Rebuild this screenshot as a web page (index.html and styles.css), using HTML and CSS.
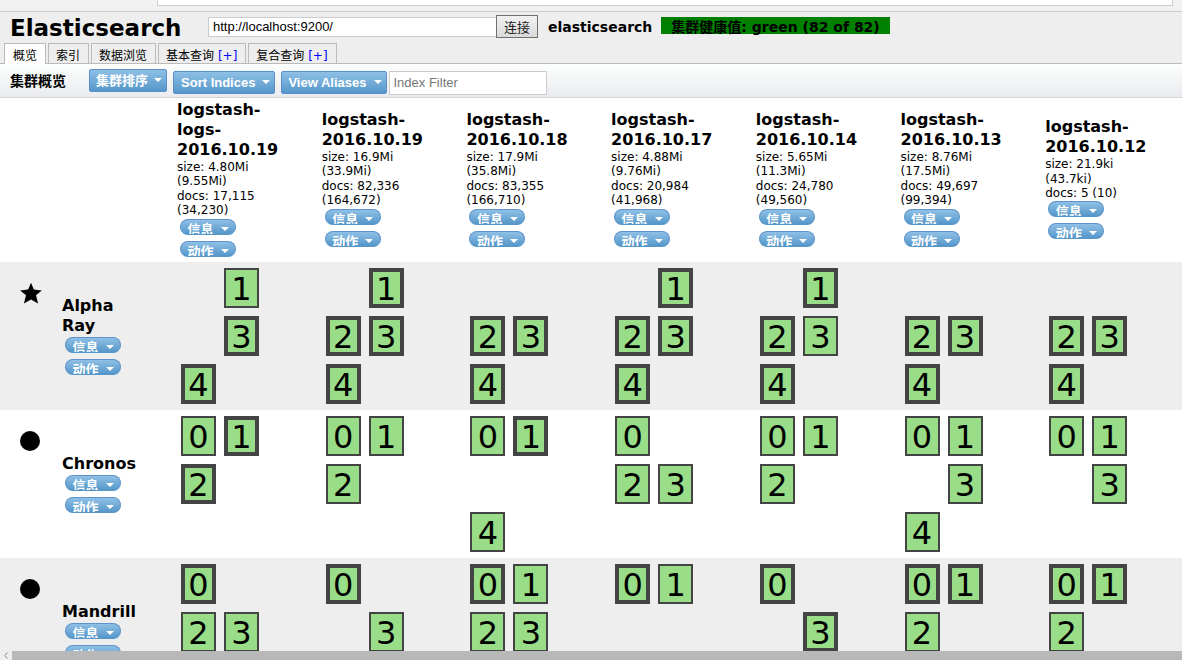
FILE: index.html
```html
<!DOCTYPE html>
<html lang="zh-CN">
<head>
<meta charset="utf-8">
<title>elasticsearch-head</title>
<link rel="stylesheet" href="styles.css">
</head>
<body>
<div class="chrome"><div class="address"></div></div>
<header class="header">
  <div class="connect">
    <h1 class="brand">Elasticsearch</h1>
    <form class="uri-form">
      <input class="uri" type="text" aria-label="URI" value="http://localhost:9200/">
      <button class="connect-button" type="button">连接</button>
    </form>
    <span class="cluster-name">elasticsearch</span>
    <span class="health">集群健康值: green (82 of 82)</span>
  </div>
  <nav class="tabs">
    <div class="tab active"><a href="#overview">概览</a></div>
    <div class="tab"><a href="#indices">索引</a></div>
    <div class="tab"><a href="#browser">数据浏览</a></div>
    <div class="tab"><a href="#basic">基本查询</a> <a class="add" href="#basic-new">[+]</a></div>
    <div class="tab"><a href="#compound">复合查询</a> <a class="add" href="#compound-new">[+]</a></div>
  </nav>
</header>
<div class="toolbar">
  <h2 class="toolbar-title">集群概览</h2>
  <button class="menu sort-cluster" type="button">集群排序<i class="caret"></i></button>
  <button class="menu" type="button">Sort Indices<i class="caret"></i></button>
  <button class="menu" type="button">View Aliases<i class="caret"></i></button>
  <input class="filter" type="text" aria-label="Index Filter" placeholder="Index Filter">
</div>
<main class="viewport">
<table class="cluster">
  <colgroup><col class="col-icon"><col class="col-name"><col span="7"></colgroup>
  <thead>
    <tr>
      <td></td><td></td>
      <th><h3>logstash-logs-2016.10.19</h3><p>size: 4.80Mi (9.55Mi)</p><p>docs: 17,115 (34,230)</p><div class="actions"><button class="pill" type="button">信息<i class="caret"></i></button><button class="pill" type="button">动作<i class="caret"></i></button></div></th>
      <th><h3>logstash-2016.10.19</h3><p>size: 16.9Mi (33.9Mi)</p><p>docs: 82,336 (164,672)</p><div class="actions"><button class="pill" type="button">信息<i class="caret"></i></button><button class="pill" type="button">动作<i class="caret"></i></button></div></th>
      <th><h3>logstash-2016.10.18</h3><p>size: 17.9Mi (35.8Mi)</p><p>docs: 83,355 (166,710)</p><div class="actions"><button class="pill" type="button">信息<i class="caret"></i></button><button class="pill" type="button">动作<i class="caret"></i></button></div></th>
      <th><h3>logstash-2016.10.17</h3><p>size: 4.88Mi (9.76Mi)</p><p>docs: 20,984 (41,968)</p><div class="actions"><button class="pill" type="button">信息<i class="caret"></i></button><button class="pill" type="button">动作<i class="caret"></i></button></div></th>
      <th><h3>logstash-2016.10.14</h3><p>size: 5.65Mi (11.3Mi)</p><p>docs: 24,780 (49,560)</p><div class="actions"><button class="pill" type="button">信息<i class="caret"></i></button><button class="pill" type="button">动作<i class="caret"></i></button></div></th>
      <th><h3>logstash-2016.10.13</h3><p>size: 8.76Mi (17.5Mi)</p><p>docs: 49,697 (99,394)</p><div class="actions"><button class="pill" type="button">信息<i class="caret"></i></button><button class="pill" type="button">动作<i class="caret"></i></button></div></th>
      <th><h3>logstash-2016.10.12</h3><p>size: 21.9ki (43.7ki)</p><p>docs: 5 (10)</p><div class="actions"><button class="pill" type="button">信息<i class="caret"></i></button><button class="pill" type="button">动作<i class="caret"></i></button></div></th>
    </tr>
  </thead>
  <tbody>
    <tr>
      <td class="icon"><svg width="22" height="22" viewBox="0 0 22 22"><path d="M11 .8 13.9 7.4 21.8 8.4 16 13.3 18.1 21.4 11 17.4 3.9 21.4 6 13.3.2 8.4 8.1 7.4Z"/></svg></td>
      <th class="name" scope="row"><h3>Alpha Ray</h3><div class="actions"><button class="pill" type="button">信息<i class="caret"></i></button><button class="pill" type="button">动作<i class="caret"></i></button></div></th>
      <td><div class="shards"><b class="s1">1</b><b class="s3 primary">3</b><b class="s4 primary">4</b></div></td>
      <td><div class="shards"><b class="s1 primary">1</b><b class="s2 primary">2</b><b class="s3 primary">3</b><b class="s4 primary">4</b></div></td>
      <td><div class="shards"><b class="s2 primary">2</b><b class="s3 primary">3</b><b class="s4 primary">4</b></div></td>
      <td><div class="shards"><b class="s1 primary">1</b><b class="s2 primary">2</b><b class="s3 primary">3</b><b class="s4 primary">4</b></div></td>
      <td><div class="shards"><b class="s1 primary">1</b><b class="s2 primary">2</b><b class="s3">3</b><b class="s4 primary">4</b></div></td>
      <td><div class="shards"><b class="s2 primary">2</b><b class="s3 primary">3</b><b class="s4 primary">4</b></div></td>
      <td><div class="shards"><b class="s2 primary">2</b><b class="s3 primary">3</b><b class="s4 primary">4</b></div></td>
    </tr>
    <tr>
      <td class="icon"><svg width="22" height="22" viewBox="0 0 22 22"><circle cx="10" cy="11" r="10"/></svg></td>
      <th class="name" scope="row"><h3>Chronos</h3><div class="actions"><button class="pill" type="button">信息<i class="caret"></i></button><button class="pill" type="button">动作<i class="caret"></i></button></div></th>
      <td><div class="shards"><b class="s0">0</b><b class="s1 primary">1</b><b class="s2 primary">2</b></div></td>
      <td><div class="shards"><b class="s0">0</b><b class="s1">1</b><b class="s2">2</b></div></td>
      <td><div class="shards"><b class="s0">0</b><b class="s1 primary">1</b><b class="s4">4</b></div></td>
      <td><div class="shards"><b class="s0">0</b><b class="s2">2</b><b class="s3">3</b></div></td>
      <td><div class="shards"><b class="s0">0</b><b class="s1">1</b><b class="s2">2</b></div></td>
      <td><div class="shards"><b class="s0">0</b><b class="s1">1</b><b class="s3">3</b><b class="s4">4</b></div></td>
      <td><div class="shards"><b class="s0">0</b><b class="s1">1</b><b class="s3">3</b></div></td>
    </tr>
    <tr>
      <td class="icon"><svg width="22" height="22" viewBox="0 0 22 22"><circle cx="10" cy="11" r="10"/></svg></td>
      <th class="name" scope="row"><h3>Mandrill</h3><div class="actions"><button class="pill" type="button">信息<i class="caret"></i></button><button class="pill" type="button">动作<i class="caret"></i></button></div></th>
      <td><div class="shards"><b class="s0 primary">0</b><b class="s2">2</b><b class="s3">3</b></div></td>
      <td><div class="shards"><b class="s0 primary">0</b><b class="s3">3</b></div></td>
      <td><div class="shards"><b class="s0 primary">0</b><b class="s1">1</b><b class="s2">2</b><b class="s3">3</b></div></td>
      <td><div class="shards"><b class="s0 primary">0</b><b class="s1">1</b></div></td>
      <td><div class="shards"><b class="s0 primary">0</b><b class="s3 primary">3</b></div></td>
      <td><div class="shards"><b class="s0 primary">0</b><b class="s1 primary">1</b><b class="s2">2</b></div></td>
      <td><div class="shards"><b class="s0 primary">0</b><b class="s1 primary">1</b><b class="s2">2</b></div></td>
    </tr>
  </tbody>
</table>
</main>
<div class="scrollbar">
  <div class="scroll-left"><svg width="4" height="7" viewBox="0 0 4 7"><path d="M3.5.5.7 3.5l2.8 3" fill="none" stroke="#888"/></svg></div>
  <div class="scroll-thumb"></div>
</div>
</body>
</html>
```

FILE: styles.css
```css
* { box-sizing: border-box; }

body {
  display: flex;
  flex-direction: column;
  height: 100vh;
  margin: 0;
  overflow: hidden;
  background: #fff;
  color: #000;
  font: 12px/1.2 "DejaVu Sans", "Noto Sans CJK SC", sans-serif;
}

h1, h2, h3, p { margin: 0; }
a { color: inherit; text-decoration: none; }

/* Browser chrome above the page */
.chrome {
  flex: none;
  height: 12px;
  padding: 0 9px 0 157px;
  background: #f2f2f2;
  border-bottom: 1px solid #ccc;
}
.address {
  height: 6px;
  background: #fff;
  border: 1px solid #ccc;
  border-top: 0;
}

/* Header */
.header {
  flex: none;
  background: #eee;
  border-bottom: 1px solid #bbb;
}
.connect {
  display: flex;
  align-items: flex-start;
  height: 31px;
  padding: 3px 10px 0;
}
.brand {
  width: 198px;
  font-size: 23px;
  line-height: 26px;
}
.uri-form { display: flex; align-items: center; }
.uri {
  width: 288px;
  height: 20px;
  padding: 0 4px;
  border: 1px solid #ccc;
  border-right: 0;
  background: #fff;
  font: 13px "Liberation Sans", sans-serif;
}
.connect-button {
  width: 42px;
  height: 23px;
  padding: 0;
  border: 1px solid #707070;
  background: linear-gradient(#f1f1f1, #dadada);
  color: #222;
  font: 13px "Noto Sans CJK SC", sans-serif;
  line-height: 20px;
}
.cluster-name, .health {
  margin: 2px 0 0 10px;
  font-size: 14px;
  font-weight: bold;
  line-height: 17px;
  height: 17px;
  padding-top: 2px;
}
.cluster-name { margin-right: -1px; }
.health { padding: 2px 10px 0; background: green; }

.tabs {
  display: flex;
  gap: 2px;
  padding-left: 4px;
}
.tab {
  height: 20px;
  padding: 3px 8px 0 7px;
  border: 1px solid #bbb;
  border-bottom: 0;
  line-height: 18px;
  white-space: nowrap;
}
.tab.active {
  margin-bottom: -1px;
  height: 21px;
  padding-left: 8px;
  background: #fff;
}
.add { color: blue; }

/* Toolbar */
.toolbar {
  flex: none;
  display: flex;
  align-items: flex-start;
  height: 34px;
  padding: 5px 10px 0;
  background: linear-gradient(#fdfefe, #e9ebee);
  border-bottom: 1px solid #d2d5d8;
}
.toolbar-title {
  width: 79px;
  font-size: 14px;
  line-height: 24px;
}
.menu {
  height: 23px;
  margin: 2px 6px 0 0;
  padding: 0 1px 0 7px;
  border: 1px solid #5b8fcb;
  border-radius: 2px;
  background: linear-gradient(#8fc0e6, #5597c9);
  color: #fff;
  font: bold 13px "Liberation Sans", "Noto Sans CJK SC", sans-serif;
  line-height: 19px;
  white-space: nowrap;
}
.sort-cluster { margin-top: 0; padding-left: 6px; }
.caret {
  display: inline-block;
  margin: 0 3px 0 7px;
  border: 4px solid transparent;
  border-top-color: #fff;
  border-bottom: 0;
  vertical-align: 3px;
}
.sort-cluster .caret { margin-left: 6px; }
.menu:nth-of-type(3) { margin-right: 2px; padding-left: 6px; }
.filter {
  width: 158px;
  height: 24px;
  margin-top: 2px;
  padding: 0 4px 2px;
  border: 1px solid #ccc;
  background: #fff;
  font: 13px "Liberation Sans", sans-serif;
}
.filter::placeholder { color: #777; }

/* Cluster table */
.viewport {
  flex: 1;
  min-height: 0;
  overflow: hidden;
}
.cluster {
  width: 100%;
  min-width: 1184px;
  table-layout: fixed;
  border-collapse: collapse;
}
.col-icon { width: 56px; }
.col-name { width: 115px; }
.cluster th, .cluster td {
  padding: 2px 6px 0;
  text-align: left;
  font-weight: normal;
}
.cluster th { padding-right: 30px; }
.cluster tbody tr:nth-child(odd) { background: #eee; }
.cluster tbody td { padding: 2px 6px; vertical-align: top; }
.cluster tbody .icon { padding: 20px 0 0 20px; }
.icon svg { display: block; }
.cluster h3 { font-size: 16px; line-height: 20px; }

.actions {
  display: flex;
  flex-direction: column;
  align-items: flex-start;
  gap: 6px;
  padding: 1px 3px 5px;
}
.cluster tbody .actions { padding: 1px 3px 3px; }
.pill {
  width: 56px;
  height: 16px;
  padding: 0;
  border: 1px solid #5f93cc;
  border-bottom-color: #5597c9;
  border-radius: 8px;
  background: linear-gradient(#8fc0e6, #5597c9);
  color: #fff;
  font: bold 13px/18px "Noto Sans CJK SC", sans-serif;
  overflow: hidden;
  white-space: nowrap;
}
.pill .caret { margin-right: 0; }

.shards {
  display: grid;
  grid-template-columns: 35px 35px;
  grid-template-rows: 40px 40px 40px;
  gap: 8px;
  padding: 4px;
}
.shards b {
  display: flex;
  align-items: center;
  justify-content: center;
  padding-top: 2px;
  border: 2px solid #444;
  background: #9d8;
  font-size: 32px;
  font-weight: normal;
  line-height: 32px;
}
.shards .primary { border-width: 4px; }
.s0 { grid-area: 1 / 1; }
.s1 { grid-area: 1 / 2; }
.s2 { grid-area: 2 / 1; }
.s3 { grid-area: 2 / 2; }
.s4 { grid-area: 3 / 1; }

/* Horizontal scroll bar */
.scrollbar {
  flex: none;
  display: flex;
  height: 9px;
}
.scroll-left {
  display: flex;
  align-items: center;
  justify-content: center;
  width: 12px;
  background: #eee;
}
.scroll-thumb { flex: 1; background: #b8b8b8; }
```
